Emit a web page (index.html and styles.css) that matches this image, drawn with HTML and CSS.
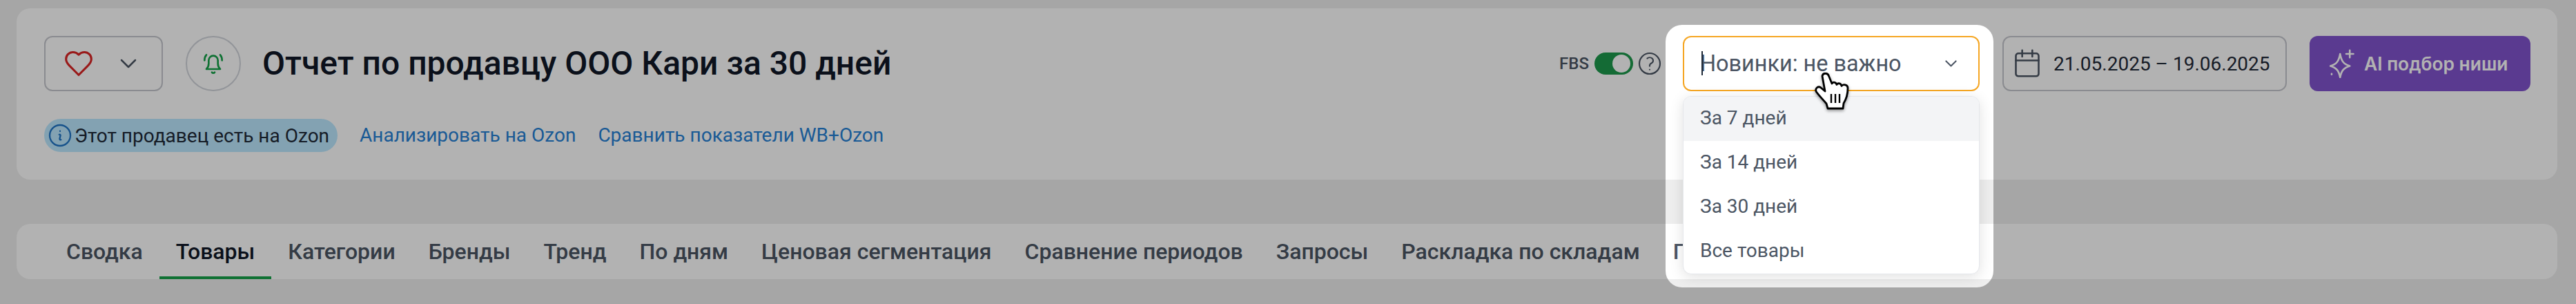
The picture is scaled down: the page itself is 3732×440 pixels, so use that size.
FILE: index.html
```html
<!DOCTYPE html>
<html lang="ru">
<head>
  <meta charset="UTF-8"/>
  <title>Отчет по продавцу</title>
  <link rel="stylesheet" href="styles.css">
</head>
<body>
  <div class="card head">
    <div class="row">
      <div class="fav-btn">
        <svg class="heart" viewBox="0 0 24 24"><path d="M19 14c1.49-1.46 3-3.21 3-5.5A5.5 5.5 0 0 0 16.5 3c-1.76 0-3 .5-4.5 2-1.5-1.5-2.74-2-4.5-2A5.5 5.5 0 0 0 2 8.5c0 2.3 1.5 4.05 3 5.5l7 7Z"/></svg>
        <svg class="chev" viewBox="0 0 24 14"><path d="M2 2l10 10L22 2"/></svg>
      </div>
      <div class="bell-btn">
        <svg class="bell" viewBox="0 0 24 24"><path d="M12 3.5a5 5 0 0 0-5 5V12c0 2.5-1 4.500-2.500 6h15c-1.500-1.500-2.500-3.500-2.500-6V8.500a5 5 0 0 0-5-5Z"/><path d="M10.500 21.500a1.800 1.800 0 0 0 3 0"/><path d="M2.500 8.500A9 9 0 0 1 4.500 2.500M21.500 8.500a9 9 0 0 0-2-6"/></svg>
      </div>
      <h1>Отчет по продавцу ООО Кари за 30 дней</h1>
      <div class="controls">
        <div class="fbs">
          <span class="fbs-label">FBS</span>
          <span class="toggle"><i></i></span>
          <svg class="help" viewBox="0 0 24 24"><path d="M9.879 7.519c1.171-1.025 3.071-1.025 4.242 0 1.172 1.025 1.172 2.687 0 3.712-.203.179-.43.326-.67.442-.745.361-1.45.999-1.45 1.827v.75M21 12a9 9 0 1 1-18 0 9 9 0 0 1 18 0Zm-9 5.250h.008v.008H12v-.008Z"/></svg>
        </div>
        <div class="select">
          <span class="select-text">Новинки: не важно</span>
          <svg class="select-chev" viewBox="0 0 24 14"><path d="M2 2l10 10L22 2"/></svg>
          <ul class="menu">
            <li class="hover">За 7 дней</li>
            <li>За 14 дней</li>
            <li>За 30 дней</li>
            <li>Все товары</li>
          </ul>
        </div>
        <div class="date-btn">
          <svg class="cal" viewBox="0 0 24 24"><rect x="3" y="4" width="18" height="18" rx="2"/><path d="M3 9.500h18M8 1.500v5M16 1.500v5"/></svg>
          <span>21.05.2025 – 19.06.2025</span>
        </div>
        <div class="ai-btn">
          <svg class="spark" viewBox="0 0 24 24"><path d="M11 4c1 6 3 8.500 8 10-5 1.500-7 4-8 9.500-1-5.500-3-8-8-9.500 5-1.500 7-4 8-10Z"/><path d="M19 1v6M16 4h6M4 20.500v.5"/></svg>
          <span>AI подбор ниши</span>
        </div>
      </div>
    </div>
    <div class="row-links">
      <span class="pill">
        <svg class="info" viewBox="0 0 24 24"><path d="m11.250 11.250.041-.02a.75.75 0 0 1 1.063.852l-.708 2.836a.75.75 0 0 0 1.063.853l.041-.021M21 12a9 9 0 1 1-18 0 9 9 0 0 1 18 0Zm-9-3.750h.008v.008H12V8.250Z"/></svg>
        Этот продавец есть на Ozon
      </span>
      <a class="link">Анализировать на Ozon</a>
      <a class="link">Сравнить показатели WB+Ozon</a>
    </div>
  </div>

  <div class="card tabs">
    <a class="tab">Сводка</a>
    <a class="tab active">Товары</a>
    <a class="tab">Категории</a>
    <a class="tab">Бренды</a>
    <a class="tab">Тренд</a>
    <a class="tab">По дням</a>
    <a class="tab">Ценовая сегментация</a>
    <a class="tab">Сравнение периодов</a>
    <a class="tab">Запросы</a>
    <a class="tab">Раскладка по складам</a>
    <a class="tab">Г</a>
  </div>

  <!-- tour overlay, the hole shows what is under it undimmed -->
  <div class="spot"></div>

  <svg class="hand" viewBox="0 0 50 54"><path d="M11 5C12 0 19 0 20.500 5L25 16C27 13 31 14 32 17.500 34 14.500 38 15.500 39 19.500 41 16.500 48 17 48 22.500 48 31 46 38 42 44.500L41 52H19L17 45C12 39 6 33 2.500 28 0 23.500 4.500 19 8.500 21.500L15 27Z"/><path class="hand-lines" d="M24 31v13M30 31v13M36 31v13"/></svg>
</body>
</html>
```

FILE: styles.css
```css
*, *::before, *::after { box-sizing: border-box; margin:0; padding:0 }
html, body { height:100%; overflow:hidden }
body {
  font-family:'Roboto',sans-serif;
  background:#eeeeee;
  padding:12px 27px 0 24px;
  position:relative;
  color:#111827;
}
svg { display:block; fill:none; stroke:currentColor; stroke-linecap:round; stroke-linejoin:round }
ul { list-style:none }

.card { background:#fff; border-radius:20px }
.head { height:248px; padding:40px 39px 0 40px }

.row { display:flex; align-items:center; height:80px }
.fav-btn {
  width:172px; height:80px;
  display:flex; align-items:center;
  padding-left:26px;
  border:2px solid #c6c8ce;
  border-radius:12px;
}
.heart { width:44px; height:44px; color:#dc2626; stroke-width:1.7 }
.chev { width:24px; height:14px; color:#4b5563; stroke-width:2.500; margin-left:38px }
.bell-btn {
  width:80px; height:80px;
  margin-left:33px;
  display:flex; align-items:center; justify-content:center;
  border:2px solid #d1d5db;
  border-radius:50%;
}
.bell { width:32px; height:32px; color:#16a34a; stroke-width:2 }
h1 { font-size:48px; font-weight:500; line-height:60px; margin-left:31px; color:#111827 }

.controls { margin-left:auto; display:flex; align-items:center; gap:33px }
.fbs { display:flex; align-items:center }
.fbs-label { font-size:24px; color:#4b5563; font-weight:500; margin-right:8px }
.toggle {
  width:56px; height:32px;
  background:#1e9a4c;
  border-radius:16px;
  display:flex; align-items:center; justify-content:flex-end;
  padding-right:4px;
}
.toggle i { width:26px; height:26px; background:#fff; border-radius:50% }
.help { width:40px; height:40px; color:#4b5563; stroke-width:1.300; margin:0 -5px 0 4px }

.select {
  width:430px; height:80px;
  position:relative;
  display:flex; align-items:center;
  padding:0 30px 0 23px;
  background:#fff;
  border:2px solid #f5a623;
  border-radius:12px;
}
.select-text { font-size:32.4px; color:#4b5563; position:relative; flex:1 }
.select-text::before {
  content:'';
  position:absolute; left:2px; top:1px;
  width:2px; height:35px;
  background:#1f2937;
}
.select-chev { width:19px; height:10px; color:#4b5563; stroke-width:2.800 }
.menu {
  position:absolute; top:85px; left:-2px; right:-2px;
  background:#fff;
  border-radius:12px;
  border:1px solid #e5e7eb;
  box-shadow:0 4px 20px rgba(0,0,0,0.12);
  overflow:hidden;
}
.menu li {
  height:64px;
  display:flex; align-items:center;
  padding:0 0 3px 24px;
  font-size:28px;
  color:#4b5563;
}
.menu li.hover { background:#f3f4f6 }

.date-btn {
  width:412px; height:80px;
  display:flex; align-items:center; gap:16px;
  padding-left:12px;
  border:2px solid #c6c8ce;
  border-radius:12px;
  font-size:28px;
  color:#1f2937;
}
.cal { width:44px; height:44px; color:#4b5563; stroke-width:1.400 }
.ai-btn {
  width:320px; height:80px;
  display:flex; align-items:center; gap:12px;
  padding-left:25px;
  background:#8254cf;
  border-radius:12px;
  color:#fff;
  font-size:26.4px;
  font-weight:600;
  font-family:'Inter',sans-serif;
}
.spark { width:42px; height:42px; stroke-width:1.500 }

.row-links { display:flex; align-items:center; margin-top:40px }
.pill {
  height:48px;
  width:425px;
  display:flex; align-items:center; gap:1px;
  padding-left:3px;
  background:#bce9ff;
  border-radius:24px;
  font-size:28px;
  color:#1f2937;
  white-space:nowrap;
}
.info { width:40px; height:40px; color:#2176c7; stroke-width:1.400 }
.link { font-size:28px; color:#2681d6; margin-left:32px; padding-bottom:2px }

.tabs { height:80px; margin-top:64px; display:flex; padding-left:48px; overflow:hidden }
.tab {
  padding:4px 24px 0;
  height:80px;
  display:flex; align-items:center;
  font-size:32px; font-weight:500;
  color:#4b5563;
  white-space:nowrap;
  border-bottom:4px solid transparent;
}
.tab.active { color:#111827; border-bottom-color:#16a34a }

.spot {
  position:absolute; left:2413px; top:36px;
  width:475px; height:380px;
  border-radius:24px;
  box-shadow:0 0 0 4000px rgba(0,0,0,0.3);
}
.hand {
  position:absolute; left:2629px; top:105px;
  width:50px; height:54px;
  fill:#fff; stroke:#000; stroke-width:2.800;
  filter:drop-shadow(0 2px 2px rgba(0,0,0,0.4));
}
.hand-lines { stroke-width:2.400; stroke-linecap:butt }
```
